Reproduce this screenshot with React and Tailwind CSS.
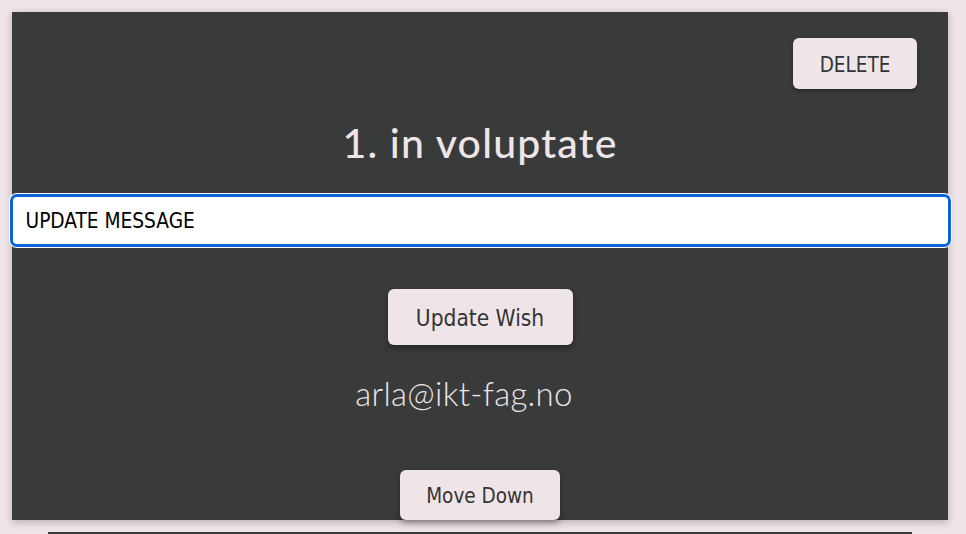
export default function App() {
    return (
        <div className="min-h-[534px] bg-[#efe5e8] pt-3 overflow-hidden">
            <div className="mx-3 w-[936px] h-[508px] bg-[#383b3a] shadow-[0_2px_8px_rgba(0,0,0,0.25)] flex flex-col items-center relative">
                <div className="w-full flex justify-end pt-[26px] pr-[31px]">
                    <button className="w-[124px] h-[51px] pt-[3px] rounded-[6px] bg-[#efe5e8] text-[#333] text-[20.5px] font-['DejaVu_Sans_Condensed',sans-serif] shadow-[0_2px_4px_rgba(0,0,0,0.3)]">
                        DELETE
                    </button>
                </div>
                <h1 className="mt-[30px] text-[41px] leading-[48px] text-[#efe5e8] font-['Lato',sans-serif] font-medium tracking-[1.2px]">
                    1. in voluptate
                </h1>
                <div className="mt-[27px] w-[941px] h-[53px] bg-white border-[3px] border-[#0b63d8] rounded-[7px] flex items-center px-[13px] pt-[2px] shadow-[0_0_0_1px_#fff]">
                    <span className="text-[20.7px] text-black font-['DejaVu_Sans_Condensed',sans-serif]">UPDATE MESSAGE</span>
                </div>
                <button className="mt-[42px] w-[185px] h-[56px] pt-[3px] rounded-[6px] bg-[#efe5e8] text-[#333] text-[22.5px] font-['DejaVu_Sans_Condensed',sans-serif] shadow-[0_3px_6px_rgba(0,0,0,0.35)]">
                    Update Wish
                </button>
                <p className="mt-[28px] -ml-[32px] text-[33px] leading-[40px] text-[#efe5e8] font-['Lato',sans-serif] font-light tracking-[0.3px]">
                    arla@ikt-fag.no
                </p>
                <button className="mt-[57px] w-[160px] h-[50px] pt-[3px] shrink-0 rounded-[6px] bg-[#efe5e8] text-[#333] text-[20.5px] font-['DejaVu_Sans_Condensed',sans-serif] shadow-[0_3px_6px_rgba(0,0,0,0.35)]">
                    Move Down
                </button>
            </div>
            <div className="mt-3 mx-[48px] w-[864px] h-[20px] bg-[#383b3a]"></div>
        </div>
    );
}
